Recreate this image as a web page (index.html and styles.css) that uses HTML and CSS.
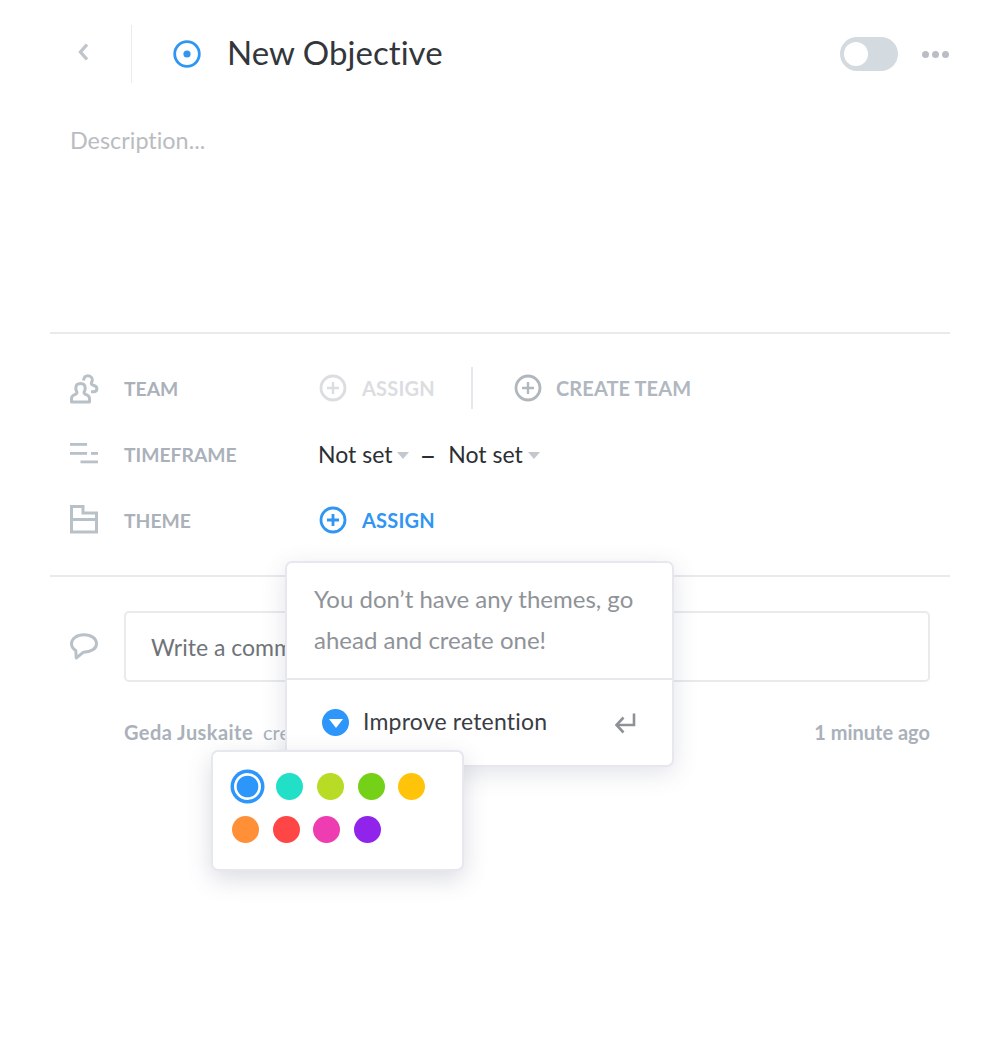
FILE: index.html
```html
<!DOCTYPE html>
<html lang="en">
<head>
<meta charset="utf-8">
<title>New Objective</title>
<link rel="stylesheet" href="styles.css">
</head>
<body>
<main class="page">
  <header class="head">
    <button class="back" aria-label="Back">
      <svg width="14" height="20" viewBox="0 0 14 20"><path d="M10 2.500 3.500 10l6.500 7.500" fill="none" stroke="#c0c5cc" stroke-width="3.400"/></svg>
    </button>
    <span class="head-rule"></span>
    <svg class="target" width="28" height="28" viewBox="0 0 28 28"><circle cx="14" cy="14" r="12.300" fill="none" stroke="#2f96f3" stroke-width="2.800"/><circle cx="14" cy="14" r="3.600" fill="#2f96f3"/></svg>
    <h1 class="title">New Objective</h1>
    <span class="toggle"><span class="knob"></span></span>
    <span class="dots"><i></i><i></i><i></i></span>
  </header>
  <p class="desc">Description...</p>

  <section class="props">
    <div class="row">
      <svg class="row-icon" width="28" height="28" viewBox="0 0 28 28" fill="none" stroke="#b9c1c8" stroke-width="3" stroke-linejoin="round"><path d="M1.500 28V24.500c0-2 1.200-3 3.200-3.800 1.800-.7 2.300-1.300 2.300-2.200 0-.8-1.200-1.800-1.200-4.300 0-2.900 1.900-4.700 4.700-4.700s4.700 1.800 4.700 4.700c0 2.500-1.200 3.500-1.200 4.300 0 .9.500 1.500 2.300 2.200 2 .8 3.200 1.800 3.200 3.800V28z"/><path d="M13.500 6.500C13.800 3.500 15.500 1.800 18 1.800s4.300 1.700 4.300 4.200c0 1.800-1 2.500-1 3.400 0 1 .9 1.500 2.600 2.100 1.900.7 3 1.500 3 3 0 2-1.500 3.200-3.400 3.200H21"/></svg>
      <span class="label">TEAM</span>
      <div class="value">
        <span class="action faint"><svg width="28" height="28" viewBox="0 0 28 28"><circle cx="14" cy="14" r="12" fill="none" stroke="currentColor" stroke-width="2.800"/><path d="M14 8v12M8 14h12" stroke="currentColor" stroke-width="2.400"/></svg>ASSIGN</span>
        <span class="vrule"></span>
        <span class="action muted"><svg width="28" height="28" viewBox="0 0 28 28"><circle cx="14" cy="14" r="12" fill="none" stroke="currentColor" stroke-width="2.800"/><path d="M14 8v12M8 14h12" stroke="currentColor" stroke-width="2.400"/></svg>CREATE TEAM</span>
      </div>
    </div>
    <div class="row">
      <svg class="row-icon" width="28" height="28" viewBox="0 0 28 28" fill="#b9c1c8"><rect x="0" y="3" width="17" height="2.800"/><rect x="0" y="12" width="17" height="2.800"/><rect x="21" y="12" width="7" height="2.800"/><rect x="10.500" y="20.500" width="17.500" height="2.800"/></svg>
      <span class="label">TIMEFRAME</span>
      <div class="value dates">
        <span class="date">Not set<i class="caret"></i></span>
        <span class="dash">–</span>
        <span class="date">Not set<i class="caret"></i></span>
      </div>
    </div>
    <div class="row">
      <svg class="row-icon" width="28" height="28" viewBox="0 0 28 28" fill="none" stroke="#b9c1c8" stroke-width="3"><path d="M1.500 26V.5h11.500v6.500h13.500v19zM1.500 13.500h25"/></svg>
      <span class="label">THEME</span>
      <div class="value">
        <span class="action blue"><svg width="28" height="28" viewBox="0 0 28 28"><circle cx="14" cy="14" r="12" fill="none" stroke="currentColor" stroke-width="2.800"/><path d="M14 8v12M8 14h12" stroke="currentColor" stroke-width="2.800"/></svg>ASSIGN</span>
      </div>
    </div>
  </section>

  <section class="comments">
    <div class="comment-row">
      <svg class="comment-icon" width="28" height="28" viewBox="0 0 28 28"><path d="M14 1.800C6.800 1.800 1.500 5.600 1.500 10.800c0 2.900 1.600 5.200 4.300 6.700l.4 7.500 7.300-5.800C21 19.200 26.500 15.800 26.500 10.700 26.500 5.600 21.200 1.800 14 1.800z" fill="none" stroke="#b9c1c8" stroke-width="3" stroke-linejoin="round"/></svg>
      <div class="comment-box">Write a comment...</div>
    </div>
    <div class="meta">
      <span class="author">Geda Juskaite</span>
      <span class="action-text">created this objective</span>
      <span class="time">1 minute ago</span>
    </div>
  </section>
</main>

<aside class="pop themes">
  <p class="themes-msg">You don’t have any themes, go ahead and create one!</p>
  <div class="themes-item">
    <span class="theme-dot"><i></i></span>
    <span class="theme-name">Improve retention</span>
    <svg class="enter" width="24" height="22" viewBox="0 0 24 22" fill="none" stroke="#8d9298" stroke-width="2.600"><path d="M21 1.500V13H4"/><path d="M10.500 5.500 3.500 13l7 7.500"/></svg>
  </div>
</aside>

<aside class="pop colors">
  <span class="swatch selected c1"></span>
  <span class="swatch c2"></span>
  <span class="swatch c3"></span>
  <span class="swatch c4"></span>
  <span class="swatch c5"></span>
  <span class="swatch c6"></span>
  <span class="swatch c7"></span>
  <span class="swatch c8"></span>
  <span class="swatch c9"></span>
</aside>
</body>
</html>
```
FILE: styles.css
```css
* { box-sizing: border-box; }
html, body { margin: 0; background: #fff; }
body {
  position: relative;
  height: 1051px;
  overflow: hidden;
  font-family: "Lato", "Open Sans", sans-serif;
  font-variant-ligatures: none;
  color: #2b2e33;
}
.page { padding: 0 36px 0 50px; }

.head { display: flex; align-items: center; height: 108px; }
.back { width: 81px; height: 56px; padding: 0 0 4px 27px; margin: 0; border: 0; background: none; display: flex; align-items: center; }
.head-rule { width: 1px; height: 58px; background: #e9ebee; }
.target { margin-left: 41px; margin-right: 26px; }
.title { margin: 0; padding-bottom: 4px; font-size: 33px; letter-spacing: .05px; font-weight: 400; line-height: 40px; flex: 1; color: #33363b; }
.toggle { width: 58px; height: 34px; border-radius: 17px; background: #d3dae0; padding: 5px 4px; margin-right: 24px; }
.knob { display: block; width: 24px; height: 24px; border-radius: 50%; background: #fff; }
.dots { display: flex; gap: 3px; margin-right: 1px; }
.dots i { width: 7px; height: 7px; border-radius: 50%; background: #b9bec5; }

.desc { margin: 0; padding: 19px 0 0 20px; height: 224px; font-size: 23.400px; line-height: 26px; color: #b9bcc0; }

.props { border-top: 2px solid #e8eaec; border-bottom: 2px solid #e8eaec; padding: 21px 0 22px 20px; }
.row { display: flex; align-items: center; height: 66px; }
.row-icon { flex: none; overflow: visible; }
.label { width: 221px; padding-left: 26px; font-size: 19.300px; font-weight: 700; color: #aab1ba; }
.value { display: flex; align-items: center; }
.action { display: flex; align-items: center; gap: 15px; font-size: 20px; letter-spacing: .2px; font-weight: 700; }
.action svg { flex: none; }
.faint { color: #dadde1; width: 152px; }
.muted { color: #b0b7bf; margin-left: 41px; gap: 14px; letter-spacing: .1px; }
.blue { color: #2f96f3; }
.vrule { width: 2px; height: 42px; background: #e6e8eb; }
.dates { font-size: 23px; color: #2b2e33; margin-left: -1px; }
.date { display: flex; align-items: center; }
.caret { width: 0; height: 0; margin: 2px 0 0 5px; border: 6px solid transparent; border-top: 7px solid #c3c8ce; border-bottom: 0; }
.dash { margin: 0 12px 0 10px; font-size: 29px; line-height: 23px; }

.comments { padding: 34px 20px 0 20px; }
.comment-row { display: flex; align-items: center; }
.comment-icon { flex: none; margin-right: 26px; }
.comment-box { flex: 1; height: 71px; border: 2px solid #e8eaec; border-radius: 5px; padding: 0 25px; display: flex; align-items: center; font-size: 23px; color: #6f7378; }
.meta { display: flex; align-items: baseline; padding: 38px 0 0 54px; font-size: 20px; }
.author { font-weight: 700; color: #aab1ba; letter-spacing: .45px; margin-right: 10px; }
.action-text { color: #aab1ba; flex: 1; }
.time { font-weight: 700; color: #aab1ba; }

.pop { position: absolute; background: #fff; border: 2px solid #e6e8ed; border-radius: 7px; box-shadow: 0 6px 24px rgba(70, 80, 110, .16); }
.themes { left: 285px; top: 561px; width: 389px; height: 206px; }
.themes-msg { margin: 0; height: 117px; padding: 15px 20px 0 27px; font-size: 24px; line-height: 41px; color: #8f9398; border-bottom: 2px solid #e6e8ed; }
.themes-item { display: flex; align-items: center; padding: 0 35px; height: 85px; }
.theme-dot { width: 27px; height: 27px; border-radius: 50%; background: #2c96fb; display: flex; align-items: center; justify-content: center; margin-right: 14px; }
.theme-dot i { width: 0; height: 0; margin-top: 2px; border: 7px solid transparent; border-top: 9px solid #fff; border-bottom: 0; }
.theme-name { flex: 1; padding-bottom: 3px; font-size: 23px; letter-spacing: .2px; color: #3a3d42; }

.colors { left: 211px; top: 750px; width: 253px; height: 121px; padding: 21px 19px; display: flex; flex-wrap: wrap; align-content: flex-start; column-gap: 13.700px; row-gap: 15.600px; box-shadow: 0 8px 24px rgba(70, 80, 110, .2); }
.swatch { display: block; width: 27px; height: 27px; border-radius: 50%; }
.selected { margin: 0 2px 0 1.500px; box-shadow: inset 0 0 0 2.700px #fff, 0 0 0 3.500px #2c96fb; }
.c1 { background: #2c96fb; }
.c2 { background: #22e0c8; }
.c3 { background: #b8dc26; }
.c4 { background: #75d018; }
.c5 { background: #ffc40a; }
.c6 { background: #ff9038; }
.c7 { background: #ff4646; }
.c8 { background: #ee3db0; }
.c9 { background: #9124ea; }
```
